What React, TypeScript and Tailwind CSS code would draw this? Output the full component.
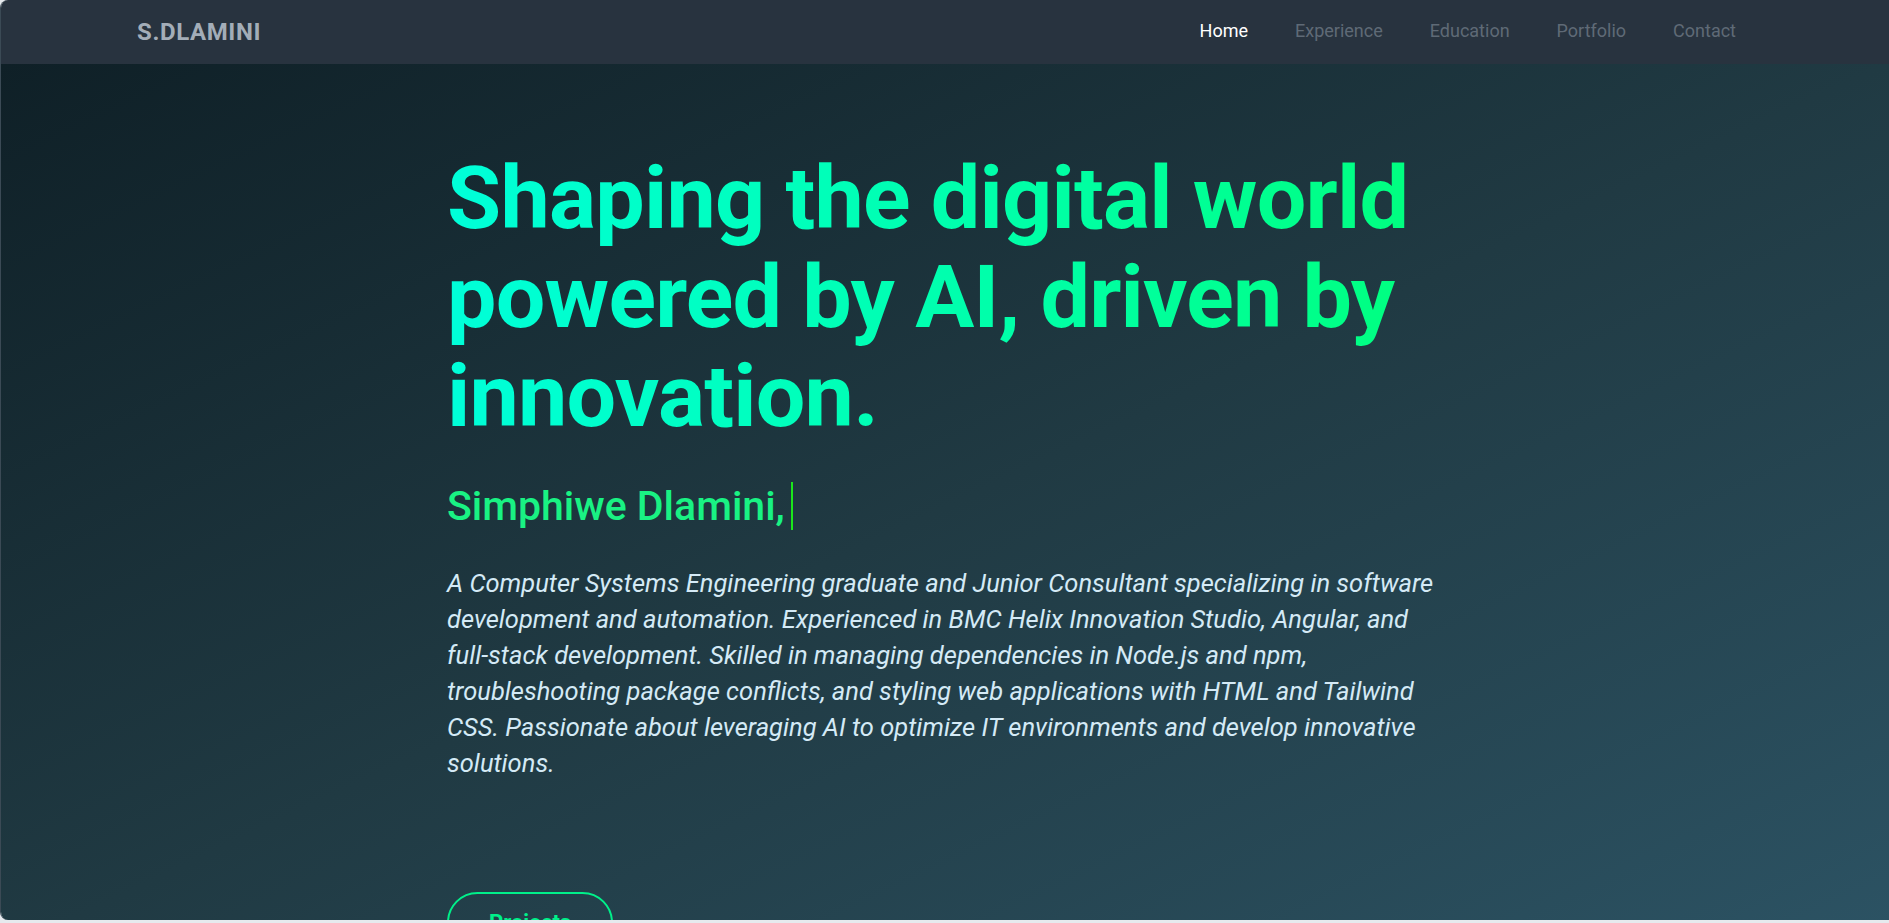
import React from "react";

export default function App() {
  const links = ["Home", "Experience", "Education", "Portfolio", "Contact"];
  return (
    <div className="h-[923px] w-full bg-[#e6eaee] pb-[3px] font-['Roboto',sans-serif]">
      <div className="flex h-full flex-col overflow-hidden rounded-l-[8px] border-l border-[#3b4a55]">
        <nav className="flex h-16 shrink-0 items-center justify-between bg-[#28333f] pl-[136px] pr-[153px]">
          <div className="text-2xl font-bold tracking-wide text-[#a3adb8]">S.DLAMINI</div>
          <ul className="flex items-center gap-[47px] pb-[2px] text-lg">
            {links.map((l, i) => (
              <li key={l} className={i === 0 ? "text-white" : "text-[#5f6a76]"}>
                {l}
              </li>
            ))}
          </ul>
        </nav>
        <main className="flex-1 bg-linear-to-br from-[#0f2027] via-[#203a43] to-[#2c5364]">
          <div className="mx-auto max-w-5xl pl-[14px] pr-[12px] pt-[84px]">
            <h1 className="bg-linear-to-r from-[#00ffd9] to-[#00ff7c] bg-clip-text text-[88px] font-bold leading-[99px] tracking-[-0.009em] text-transparent">
              Shaping the digital world powered by AI, driven by innovation.
            </h1>
            <h2 className="mt-[31px] text-[41px] font-medium leading-[60px] text-[#19f283]">
              <span className="border-r-2 border-[#1be61b] pr-[6px]">Simphiwe Dlamini,</span>
            </h2>
            <p className="mt-[29px] text-[25.5px] italic leading-9 text-[#d4eaf6]">
              A Computer Systems Engineering graduate and Junior Consultant specializing in software
              development and automation. Experienced in BMC Helix Innovation Studio, Angular, and
              full-stack development. Skilled in managing dependencies in Node.js and npm,
              troubleshooting package conflicts, and styling web applications with HTML and Tailwind
              CSS. Passionate about leveraging AI to optimize IT environments and develop innovative
              solutions.
            </p>
            <button className="mt-[111px] rounded-full border-2 border-[#00f08a] px-10 py-3 text-[22px] font-bold text-[#00f08a]">
              Projects
            </button>
          </div>
        </main>
      </div>
    </div>
  );
}
